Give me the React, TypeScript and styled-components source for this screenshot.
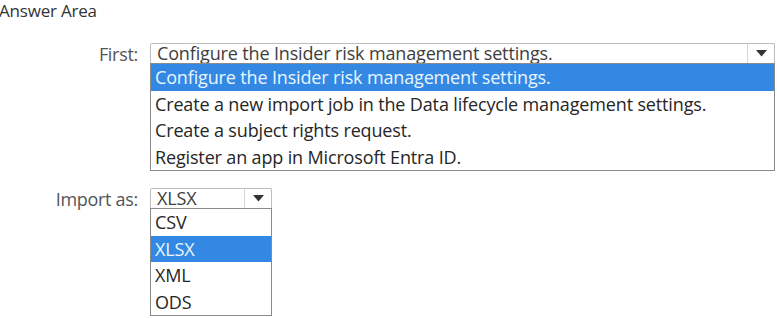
import React from "react";
import styled, { createGlobalStyle } from "styled-components";

const Global = createGlobalStyle`
  html, body { margin: 0; padding: 0; background: #ffffff; }
  body { font-family: "Open Sans", "Noto Sans", sans-serif; color: #2b2b2b; }
`;

const Page = styled.div`
  width: 777px;
  height: 318px;
  overflow: hidden;
  background: #fff;
  display: flex;
  flex-direction: column;
`;

const Title = styled.div`
  font-size: 17px;
  line-height: 22px;
  color: #333;
  margin-left: -1px;
  letter-spacing: -0.2px;
`;

const Form = styled.div`
  display: grid;
  grid-template-columns: 138px auto;
  column-gap: 12px;
  row-gap: 17px;
  margin-top: 21px;
  align-items: start;
`;

const Label = styled.div`
  text-align: right;
  font-size: 18px;
  line-height: 22px;
  color: #555;
  letter-spacing: -0.3px;
`;

const Select = styled.div<{ $w: number }>`
  width: ${(p) => p.$w}px;
  display: flex;
  flex-direction: column;
`;

const Header = styled.div`
  height: 20px;
  display: flex;
  border: 1px solid #bdbdbd;
  border-bottom: none;
  border-radius: 2px 2px 0 0;
  background: #fff;
  box-sizing: border-box;
`;

const HeaderText = styled.div`
  flex: 1;
  font-size: 18px;
  line-height: 19px;
  color: #3e3e3e;
  padding-left: 6px;
  white-space: nowrap;
  letter-spacing: -0.15px;
`;

const Arrow = styled.div`
  width: 26px;
  border-left: 1px solid #d6d6d6;
  display: flex;
  align-items: center;
  justify-content: center;
`;

const List = styled.div`
  border: 1px solid #8a8a8a;
  display: flex;
  flex-direction: column;
  background: #fff;
`;

const Item = styled.div<{ $sel?: boolean }>`
  height: 26.5px;
  line-height: 26px;
  font-size: 18px;
  padding-left: 4px;
  white-space: nowrap;
  letter-spacing: -0.15px;
  color: ${(p) => (p.$sel ? "#eaf6ff" : "#262626")};
  background: ${(p) => (p.$sel ? "#3388e4" : "transparent")};
`;

const Caret = () => (
  <svg width="11" height="7" viewBox="0 0 11 7">
    <path d="M0 0 H11 L5.5 6.5 Z" fill="#333" />
  </svg>
);

type Props = {
  label: string;
  width: number;
  value: string;
  options: string[];
  selected: number;
};

const Field = ({ label, width, value, options, selected }: Props) => (
  <>
    <Label>{label}</Label>
    <Select $w={width}>
      <Header>
        <HeaderText>{value}</HeaderText>
        <Arrow>
          <Caret />
        </Arrow>
      </Header>
      <List>
        {options.map((o, i) => (
          <Item key={o} $sel={i === selected}>
            {o}
          </Item>
        ))}
      </List>
    </Select>
  </>
);

export default function App() {
  return (
    <Page>
      <Global />
      <Title>Answer Area</Title>
      <Form>
        <Field
          label="First:"
          width={625}
          value="Configure the Insider risk management settings."
          selected={0}
          options={[
            "Configure the Insider risk management settings.",
            "Create a new import job in the Data lifecycle management settings.",
            "Create a subject rights request.",
            "Register an app in Microsoft Entra ID.",
          ]}
        />
        <Field
          label="Import as:"
          width={122}
          value="XLSX"
          selected={1}
          options={["CSV", "XLSX", "XML", "ODS"]}
        />
      </Form>
    </Page>
  );
}
